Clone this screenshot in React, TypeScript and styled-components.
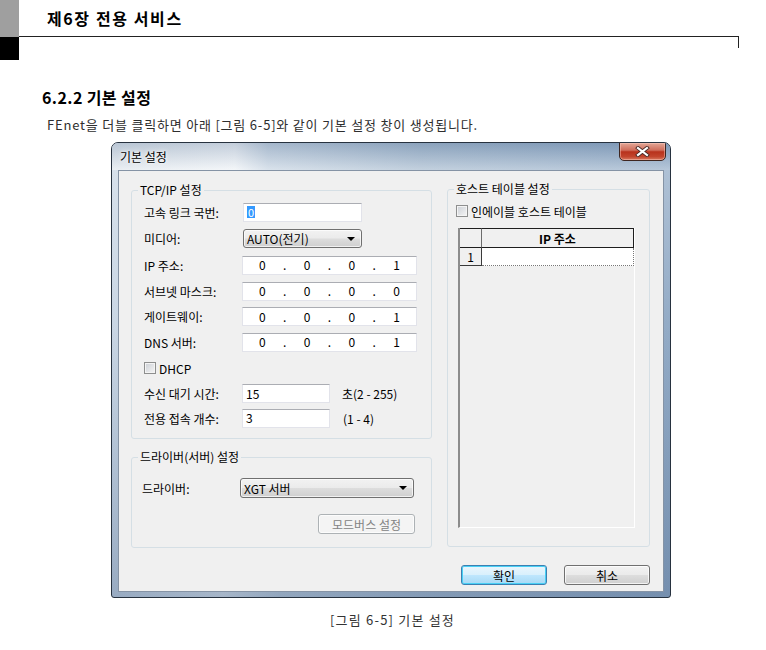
import React from 'react'
import styled, { createGlobalStyle } from 'styled-components'

const KR = `"Noto Sans CJK KR", "Noto Sans", sans-serif`

const GlobalStyle = createGlobalStyle`
  body {
    margin: 0;
    background: #fff;
    font-family: ${KR};
    color: #000;
  }
`

const Page = styled.div`
  width: 766px;
  height: 650px;
  overflow: hidden;
`

/* ---------- document header ---------- */

const Header = styled.div`
  display: flex;
  height: 60px;
`
const Strip = styled.div`
  width: 19px;
  display: flex;
  flex-direction: column;
`
const StripGray = styled.div`
  height: 37px;
  background: #9f9f9f;
`
const StripBlack = styled.div`
  height: 23px;
  background: #000;
`
const HeadMain = styled.div`
  width: 720px;
`
const ChapterTitle = styled.div`
  height: 36px;
  border-bottom: 1px solid #222;
  padding-left: 28px;
  display: flex;
  align-items: center;
  font-size: 16px;
  font-weight: 700;
  letter-spacing: 1.6px;
`
const HeadTick = styled.div`
  height: 11px;
  border-right: 1px solid #222;
`

const SectionTitle = styled.h2`
  margin: 27px 0 0 42px;
  font-size: 16px;
  line-height: 20px;
  font-weight: 700;
  letter-spacing: 0.4px;
`
const Paragraph = styled.p`
  margin: 9px 0 0 47px;
  font-size: 13px;
  line-height: 18px;
  color: #2e2e2e;
  letter-spacing: 0.8px;
`
const Caption = styled.div`
  margin: 13px 0 0 330px;
  font-size: 13px;
  line-height: 18px;
  color: #333;
  letter-spacing: 1.2px;
`

/* ---------- window frame ---------- */

const Window = styled.div`
  margin: 8px 0 0 111px;
  width: 560px;
  height: 456px;
  box-sizing: border-box;
  border: 1px solid #27323f;
  border-radius: 7px 7px 3px 3px;
  display: flex;
  flex-direction: column;
  background:
    linear-gradient(180deg, rgba(255, 255, 255, 0) 0%, rgba(255, 255, 255, 0.25) 6%, rgba(255, 255, 255, 0) 40%, rgba(60, 90, 130, 0.35) 100%),
    linear-gradient(90deg, #c9d6e4 0%, #dfe7ef 20%, #c0cfde 30%, #a7bbd0 60%, #93abc6 100%);
  overflow: hidden;
`
const TitleBar = styled.div`
  height: 27px;
  display: flex;
  justify-content: space-between;
  align-items: flex-start;
  padding-left: 8px;
  background:
    linear-gradient(180deg, rgba(70, 100, 140, 0.25) 0%, rgba(255, 255, 255, 0.35) 100%),
    linear-gradient(90deg, #dfe6ec 0%, #eef2f6 22%, #c5d3e1 28%, #a3b8cd 55%, #8fa9c5 100%);
`
const WinTitle = styled.span`
  font-size: 12px;
  line-height: 28px;
  color: #000;
  text-shadow: 0 0 6px #fff, 0 0 3px #fff;
`
const CloseBtn = styled.div`
  width: 47px;
  height: 19px;
  margin: -1px 4px 0 0;
  box-sizing: border-box;
  border: 1px solid #3e2620;
  border-radius: 0 0 5px 5px;
  background: linear-gradient(180deg, #e3a797 0%, #cf6e5c 42%, #b8321c 52%, #c2452d 80%, #d87a60 100%);
  box-shadow: inset 0 0 0 1px rgba(255, 210, 200, 0.45);
  display: flex;
  align-items: center;
  justify-content: center;
`
const Client = styled.div`
  flex: 1;
  margin: 0 6px 5px 6px;
  border: 1px solid #8593a5;
  background: #f0f0f0;
  padding: 12px 13px 6px 12px;
  display: flex;
  flex-direction: column;
  font-size: 12px;
`

/* ---------- dialog content ---------- */

const Panes = styled.div`
  display: flex;
  gap: 15px;
`
const LeftCol = styled.div`
  display: flex;
  flex-direction: column;
  gap: 11px;
`
const Group = styled.fieldset<{ $w: number; $h: number }>`
  margin: 0;
  padding: 0;
  width: ${(p) => p.$w}px;
  height: ${(p) => p.$h}px;
  box-sizing: border-box;
  border: 1px solid #d5dfe5;
  border-radius: 3px;
  min-width: 0;
`
const Legend = styled.legend`
  margin-left: 6px;
  padding: 0 2px;
  font-size: 12px;
  line-height: 14px;
  color: #000;
`
const Rows = styled.div<{ $top: number; $left: number }>`
  padding: ${(p) => p.$top}px 0 0 ${(p) => p.$left}px;
  display: flex;
  flex-direction: column;
`
const Row = styled.div<{ $h: number }>`
  height: ${(p) => p.$h}px;
  display: flex;
  align-items: center;
`
const Label = styled.span`
  width: 98px;
  flex: none;
  white-space: nowrap;
`
const TextBox = styled.div<{ $w: number }>`
  width: ${(p) => p.$w}px;
  height: 19px;
  box-sizing: border-box;
  border: 1px solid #e2e3ea;
  border-top-color: #abadb3;
  background: #fff;
  padding-left: 3px;
  display: flex;
  align-items: center;
  line-height: 16px;
`
const Selected = styled.span`
  background: #3399ff;
  color: #fff;
  padding: 0 1px;
  line-height: 12px;
  font-size: 11px;
`
const IpBox = styled.div`
  width: 175px;
  height: 19px;
  box-sizing: border-box;
  border: 1px solid #e2e3ea;
  border-top-color: #abadb3;
  background: #fff;
  display: grid;
  grid-template-columns: 1fr 6px 1fr 6px 1fr 6px 1fr;
  align-items: center;
  text-align: center;
  line-height: 16px;
`
const Combo = styled.div<{ $w: number }>`
  width: ${(p) => p.$w}px;
  height: 19px;
  box-sizing: border-box;
  border: 1px solid #707070;
  border-radius: 3px;
  background: linear-gradient(180deg, #f2f2f2 0%, #ebebeb 48%, #dddddd 52%, #cfcfcf 100%);
  box-shadow: inset 0 0 0 1px rgba(255, 255, 255, 0.7);
  padding: 0 6px 0 3px;
  display: flex;
  align-items: center;
  justify-content: space-between;
`
const Hint = styled.span<{ $ml: number }>`
  margin-left: ${(p) => p.$ml}px;
  white-space: nowrap;
`
const Check = styled.span`
  width: 12px;
  height: 12px;
  box-sizing: border-box;
  border: 1px solid #8e8f8f;
  background: linear-gradient(135deg, #cbcfd5 0%, #f6f6f6 100%);
  box-shadow: inset 0 0 0 1px #f4f4f4;
  margin-right: 3px;
  flex: none;
`
const BtnBar = styled.div<{ $mt: number; $pr: number }>`
  margin-top: ${(p) => p.$mt}px;
  padding-right: ${(p) => p.$pr}px;
  display: flex;
  justify-content: flex-end;
  gap: 17px;
`
const Button = styled.div<{ $w: number; $variant?: 'default' | 'disabled' }>`
  width: ${(p) => p.$w}px;
  height: 20px;
  box-sizing: border-box;
  border-radius: 3px;
  display: flex;
  align-items: center;
  justify-content: center;
  font-size: 12px;
  border: 1px solid
    ${(p) => (p.$variant === 'default' ? '#3c7fb1' : p.$variant === 'disabled' ? '#adb2b5' : '#707070')};
  color: ${(p) => (p.$variant === 'disabled' ? '#838383' : '#000')};
  background: ${(p) =>
    p.$variant === 'default'
      ? 'linear-gradient(180deg, #eaf6fd 0%, #d9f0fc 48%, #bee6fd 52%, #a7d9f5 100%)'
      : p.$variant === 'disabled'
        ? '#f4f4f4'
        : 'linear-gradient(180deg, #f2f2f2 0%, #ebebeb 48%, #dddddd 52%, #cfcfcf 100%)'};
  box-shadow: ${(p) =>
    p.$variant === 'default' ? 'inset 0 0 0 1px #48d0f5' : 'inset 0 0 0 1px rgba(255, 255, 255, 0.75)'};
`

/* ---------- host table ---------- */

const HostTable = styled.div`
  margin: 6px 0 0 10px;
  width: 177px;
  height: 300px;
  box-sizing: border-box;
  border-left: 2px solid #8c8c8c;
  border-bottom: 1px solid #fff;
  border-right: 1px solid #fff;
  background: #f0f0f0;
`
const TRow = styled.div<{ $h: number }>`
  display: grid;
  grid-template-columns: 22px 1fr;
  height: ${(p) => p.$h}px;
`
const HeadCell = styled.div<{ $last?: boolean }>`
  border-top: 1px solid #1e1e1e;
  border-bottom: 1px solid #1e1e1e;
  border-right: 1px solid ${(p) => (p.$last ? '#1e1e1e' : '#6c6c6c')};
  display: flex;
  align-items: center;
  justify-content: center;
  font-weight: 700;
  background: #f0f0f0;
`
const NumCell = styled.div`
  border-bottom: 1px solid #3a3a3a;
  border-right: 1px solid #3a3a3a;
  display: flex;
  align-items: center;
  justify-content: center;
`
const DataCell = styled.div`
  background: #fff;
  border-bottom: 1px dotted #777;
  border-right: 1px dotted #777;
`

const Arrow = () => (
  <svg width="8" height="4" viewBox="0 0 8 4">
    <polygon points="0,0 8,0 4,4" fill="#000" />
  </svg>
)

const CloseGlyph = () => (
  <svg width="15" height="11" viewBox="0 0 15 11">
    <path d="M3 2 L12 9 M12 2 L3 9" stroke="#4a2a26" strokeWidth="4" strokeLinecap="square" />
    <path d="M3 2 L12 9 M12 2 L3 9" stroke="#fff" strokeWidth="2.2" strokeLinecap="square" />
  </svg>
)

const Ip = ({ parts }: { parts: string[] }) => (
  <IpBox>
    <span>{parts[0]}</span>
    <span>.</span>
    <span>{parts[1]}</span>
    <span>.</span>
    <span>{parts[2]}</span>
    <span>.</span>
    <span>{parts[3]}</span>
  </IpBox>
)

const App: React.FC = () => {
  return (
    <Page>
      <GlobalStyle />
      <Header>
        <Strip>
          <StripGray />
          <StripBlack />
        </Strip>
        <HeadMain>
          <ChapterTitle>제6장 전용 서비스</ChapterTitle>
          <HeadTick />
        </HeadMain>
      </Header>

      <SectionTitle>6.2.2 기본 설정</SectionTitle>
      <Paragraph>FEnet을 더블 클릭하면 아래 [그림 6-5]와 같이 기본 설정 창이 생성됩니다.</Paragraph>

      <Window>
        <TitleBar>
          <WinTitle>기본 설정</WinTitle>
          <CloseBtn>
            <CloseGlyph />
          </CloseBtn>
        </TitleBar>
        <Client>
          <Panes>
            <LeftCol>
              <Group $w={301} $h={256}>
                <Legend>TCP/IP 설정</Legend>
                <Rows $top={2} $left={12}>
                  <Row $h={26}>
                    <Label>고속 링크 국번:</Label>
                    <TextBox $w={119} style={{ marginLeft: 1 }}>
                      <Selected>0</Selected>
                    </TextBox>
                  </Row>
                  <Row $h={27}>
                    <Label>미디어:</Label>
                    <Combo $w={119} style={{ marginLeft: 1 }}>
                      <span>AUTO(전기)</span>
                      <Arrow />
                    </Combo>
                  </Row>
                  <Row $h={26}>
                    <Label>IP 주소:</Label>
                    <Ip parts={['0', '0', '0', '1']} />
                  </Row>
                  <Row $h={26}>
                    <Label>서브넷 마스크:</Label>
                    <Ip parts={['0', '0', '0', '0']} />
                  </Row>
                  <Row $h={25}>
                    <Label>게이트웨이:</Label>
                    <Ip parts={['0', '0', '0', '1']} />
                  </Row>
                  <Row $h={26}>
                    <Label>DNS 서버:</Label>
                    <Ip parts={['0', '0', '0', '1']} />
                  </Row>
                  <Row $h={26}>
                    <Check />
                    <span>DHCP</span>
                  </Row>
                  <Row $h={25}>
                    <Label>수신 대기 시간:</Label>
                    <TextBox $w={88}>15</TextBox>
                    <Hint $ml={12}>초(2 - 255)</Hint>
                  </Row>
                  <Row $h={24}>
                    <Label>전용 접속 개수:</Label>
                    <TextBox $w={88}>3</TextBox>
                    <Hint $ml={13}>(1 - 4)</Hint>
                  </Row>
                </Rows>
              </Group>

              <Group $w={301} $h={98}>
                <Legend>드라이버(서버) 설정</Legend>
                <Rows $top={14} $left={10}>
                  <Row $h={20}>
                    <Label>드라이버:</Label>
                    <Combo $w={174} style={{ height: 20 }}>
                      <span>XGT 서버</span>
                      <Arrow />
                    </Combo>
                  </Row>
                </Rows>
                <BtnBar $mt={16} $pr={16}>
                  <Button $w={97} $variant="disabled">모드버스 설정</Button>
                </BtnBar>
              </Group>
            </LeftCol>

            <Group $w={203} $h={365} style={{ marginTop: -1 }}>
              <Legend>호스트 테이블 설정</Legend>
              <Rows $top={4} $left={8}>
                <Row $h={22}>
                  <Check />
                  <span>인에이블 호스트 테이블</span>
                </Row>
              </Rows>
              <HostTable>
                <TRow $h={20}>
                  <HeadCell />
                  <HeadCell $last>IP 주소</HeadCell>
                </TRow>
                <TRow $h={17}>
                  <NumCell>1</NumCell>
                  <DataCell />
                </TRow>
              </HostTable>
            </Group>
          </Panes>

          <BtnBar $mt={17} $pr={0}>
            <Button $w={86} $variant="default">확인</Button>
            <Button $w={86}>취소</Button>
          </BtnBar>
        </Client>
      </Window>

      <Caption>[그림 6-5] 기본 설정</Caption>
    </Page>
  )
}

export default App
